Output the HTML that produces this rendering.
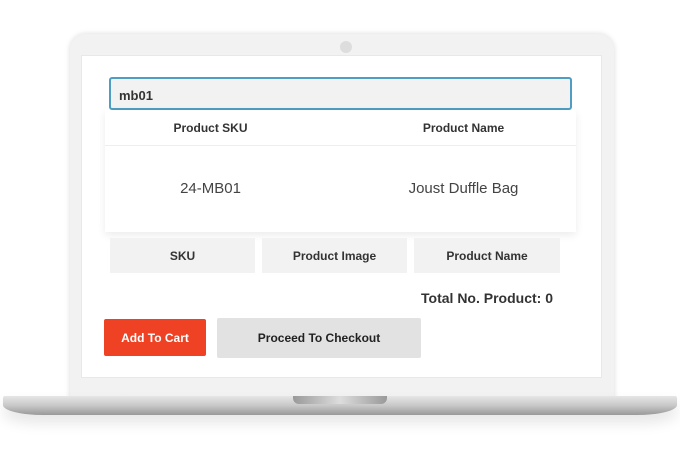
<!DOCTYPE html>
<html><head><style>
body{margin:0;width:680px;height:450px;background:#fff;position:relative;overflow:hidden;font-family:"Liberation Sans",sans-serif;color:#333}
div{position:absolute;box-sizing:border-box}
.b{font-weight:bold;font-size:12px;text-align:center}
</style></head><body>
<div style="left:70px;top:34px;width:544px;height:370px;background:#f2f2f2;border-radius:16px 16px 0 0;box-shadow:0 0 6px rgba(0,0,0,.15)"></div>
<div style="left:340px;top:41px;width:12px;height:12px;border-radius:50%;background:#ddd"></div>
<div style="left:81px;top:55px;width:521px;height:323px;background:#fff;border:1px solid #e8e8e8"></div>
<div style="left:109px;top:77px;width:463px;height:33px;background:#f2f2f2;border:2px solid #4f9dc2;border-radius:3px;font-size:13px;font-weight:bold;padding:9px 0 0 8px;color:#333">mb01</div>
<div style="left:105px;top:110px;width:471px;height:122px;background:#fff;box-shadow:0 3px 8px rgba(0,0,0,.08)"></div>
<div style="left:105px;top:145px;width:471px;height:1px;background:#eee"></div>
<div class="b" style="left:105px;top:121px;width:211px">Product SKU</div>
<div class="b" style="left:358px;top:121px;width:211px">Product Name</div>
<div style="left:105px;top:180px;width:211px;text-align:center;font-size:15px;color:#444">24-MB01</div>
<div style="left:358px;top:180px;width:211px;text-align:center;font-size:15px;color:#444">Joust Duffle Bag</div>
<div class="b" style="left:110px;top:238px;width:145px;height:35px;background:#f2f2f2;padding-top:11px">SKU</div>
<div class="b" style="left:262px;top:238px;width:145px;height:35px;background:#f2f2f2;padding-top:11px">Product Image</div>
<div class="b" style="left:414px;top:238px;width:146px;height:35px;background:#f2f2f2;padding-top:11px">Product Name</div>
<div style="left:380px;top:290px;width:173px;text-align:right;font-size:14px;font-weight:bold">Total No. Product: 0</div>
<div style="left:104px;top:319px;width:102px;height:37px;background:#ef4123;border-radius:2px;color:#fff;font-size:12px;font-weight:bold;text-align:center;padding-top:12px">Add To Cart</div>
<div style="left:217px;top:318px;width:204px;height:40px;background:#e2e2e2;border-radius:2px;color:#222;font-size:12px;font-weight:bold;text-align:center;padding-top:13px">Proceed To Checkout</div>
<div style="left:3px;top:396px;width:674px;height:19px;background:linear-gradient(#e6e6e6,#c8c8c8 50%,#999);border-radius:2px 2px 40px 40px/2px 2px 10px 10px;box-shadow:0 8px 14px rgba(0,0,0,.1)"></div>
<div style="left:293px;top:396px;width:94px;height:8px;background:linear-gradient(90deg,#999,#ddd 50%,#999);border-radius:0 0 6px 6px"></div>
</body></html>
